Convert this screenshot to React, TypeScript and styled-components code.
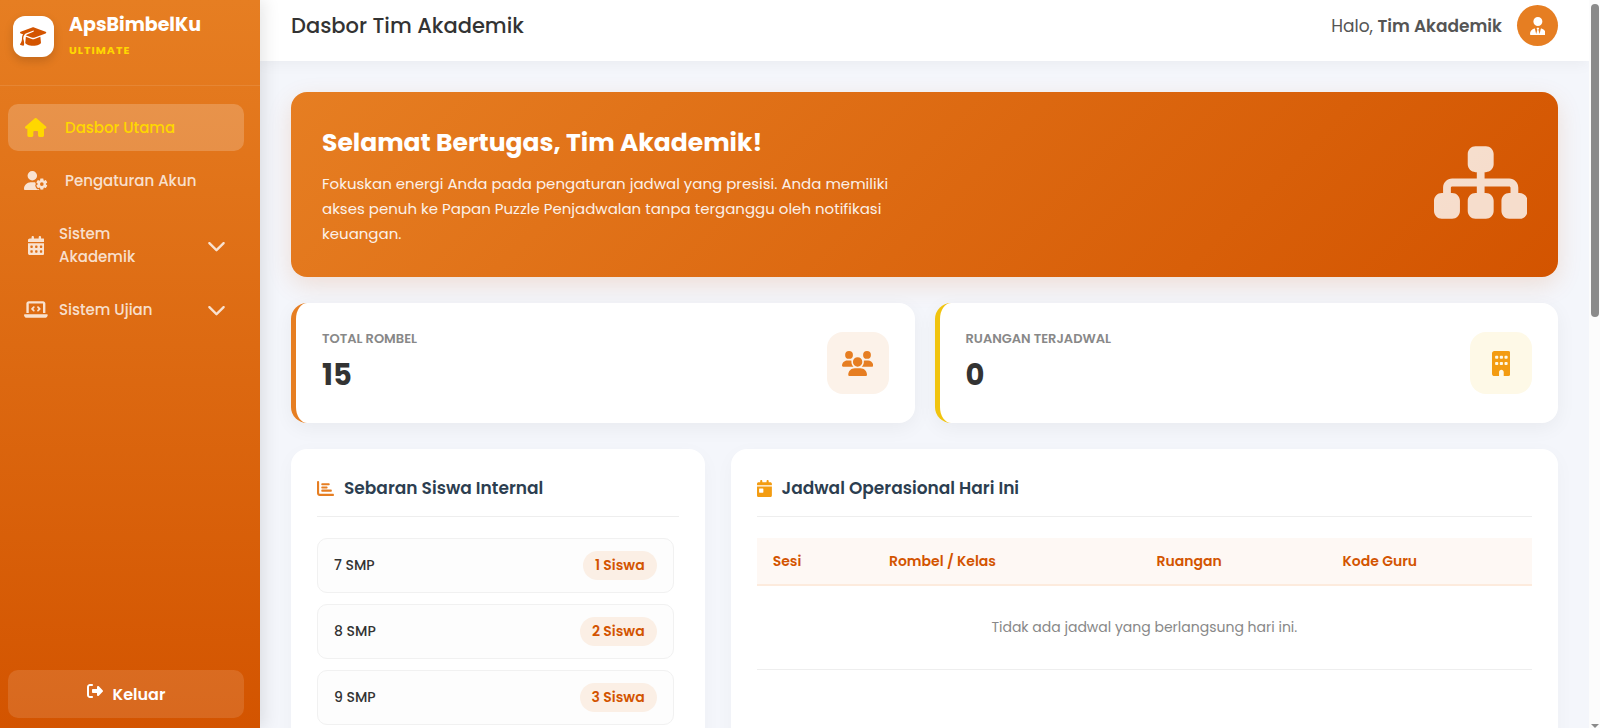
import React from "react";
import styled, { createGlobalStyle } from "styled-components";
import {
  FaBuilding,
  FaCalendarDay,
  FaCalendarDays,
  FaChartBar,
  FaChevronDown,
  FaGraduationCap,
  FaHouse,
  FaLaptopCode,
  FaRightFromBracket,
  FaSitemap,
  FaUserGear,
  FaUserTie,
  FaUsers,
} from "react-icons/fa6";

const GlobalStyle = createGlobalStyle`
  *, *::before, *::after { box-sizing: border-box; }
  body {
    margin: 0;
    font-family: Poppins, Inter, sans-serif;
    font-size: 15px;
    color: #333;
    background: #f4f6fb;
  }
  h1, h2, h3, p, ul { margin: 0; padding: 0; }
  ul { list-style: none; }
  button { font: inherit; cursor: pointer; }
`;

/* Icons share a 512-unit height; $units is the width of the glyph's own box. */
const Icon = styled.span<{ $units?: number }>`
  display: inline-flex;
  flex-shrink: 0;

  svg {
    display: block;
    width: auto;
    height: 1em;
    aspect-ratio: ${(p) => p.$units ?? 512} / 512;
  }
`;

const Shell = styled.div`
  display: flex;
  height: 100vh;
  overflow: hidden;
`;

const Sidebar = styled.aside`
  display: flex;
  flex-direction: column;
  flex: 0 0 260px;
  background: linear-gradient(180deg, #e67e22 0%, #d35400 100%);
  box-shadow: 4px 0 16px rgba(0, 0, 0, 0.1);
  z-index: 2;
`;

const Brand = styled.div`
  display: flex;
  gap: 15px;
  padding: 12px 13px 23px;
  border-bottom: 1px solid rgba(255, 255, 255, 0.1);
`;

const BrandMark = styled.div`
  display: grid;
  place-items: center;
  width: 41px;
  height: 41px;
  margin-top: 4px;
  border-radius: 12px;
  background: #fff;
  color: #d35400;
  font-size: 21px;
  box-shadow: 0 4px 10px rgba(0, 0, 0, 0.15);
`;

const BrandName = styled.div`
  color: #fff;
  font-size: 19px;
  font-weight: 700;
  line-height: 26px;
`;

const BrandTier = styled.div`
  color: #ffd700;
  font-size: 11px;
  font-weight: 700;
  letter-spacing: 1px;
  line-height: 24px;
`;

const Menu = styled.ul`
  display: flex;
  flex-direction: column;
  gap: 6px;
  flex: 1;
  padding: 18px 16px 0 8px;
`;

const MenuLink = styled.a<{ $active?: boolean }>`
  display: flex;
  align-items: center;
  gap: 17px;
  padding: 12px 16px;
  border-radius: 10px;
  font-weight: 500;
  line-height: 23px;
  text-decoration: none;
  color: ${(p) => (p.$active ? "#ffd700" : "rgba(255, 255, 255, 0.8)")};
  background: ${(p) => (p.$active ? "rgba(255, 255, 255, 0.2)" : "transparent")};
`;

const MenuToggle = styled.button`
  display: flex;
  align-items: center;
  gap: 11px;
  width: 100%;
  padding: 12px 18px 12px 16px;
  border: 0;
  border-radius: 10px;
  background: transparent;
  color: rgba(255, 255, 255, 0.8);
  font-weight: 500;
  line-height: 23px;
  text-align: left;
`;

const MenuIcon = styled(Icon)`
  justify-content: center;
  width: 24px;
  font-size: 19px;
`;

const ToggleLabel = styled.span`
  flex: 1;
  max-width: 100px;
`;

const Chevron = styled(Icon)`
  margin-left: auto;
  font-size: 19px;
`;

const SidebarFooter = styled.div`
  padding: 10px 16px 10px 8px;
`;

const LogoutButton = styled.button`
  display: flex;
  align-items: center;
  justify-content: center;
  gap: 10px;
  width: 100%;
  height: 48px;
  border: 0;
  border-radius: 10px;
  background: rgba(255, 255, 255, 0.12);
  color: #fff;
  font-size: 16px;
  font-weight: 600;

  svg { margin-bottom: 6px; }
`;

const Main = styled.main`
  flex: 1;
  min-width: 0;
`;

const TopBar = styled.header`
  display: flex;
  align-items: center;
  justify-content: space-between;
  padding: 5px 31px 15px;
  background: #fff;
  box-shadow: 0 2px 15px rgba(0, 0, 0, 0.05);
`;

const PageTitle = styled.h1`
  font-size: 21px;
  font-weight: 500;
  line-height: 32px;
`;

const Account = styled.div`
  display: flex;
  align-items: center;
  gap: 15px;
  color: #555;
  font-size: 17px;

  strong { font-weight: 600; }
`;

const Avatar = styled.span`
  display: grid;
  place-items: center;
  width: 41px;
  height: 41px;
  border-radius: 50%;
  background: #e67e22;
  color: #fff;
  font-size: 18px;
`;

const Content = styled.div`
  display: flex;
  flex-direction: column;
  gap: 26px;
  padding: 31px;
`;

const Banner = styled.section`
  display: flex;
  align-items: center;
  justify-content: space-between;
  padding: 31px;
  border-radius: 16px;
  background: linear-gradient(135deg, #e67e22 0%, #d35400 100%);
  color: #fff;
  box-shadow: 0 8px 24px rgba(211, 84, 0, 0.15);
`;

const BannerTitle = styled.h2`
  margin-bottom: 8px;
  font-size: 25px;
  font-weight: 700;
  line-height: 40px;
`;

const BannerText = styled.p`
  max-width: 600px;
  line-height: 25px;
  opacity: 0.9;
`;

const BannerArt = styled(Icon)`
  padding-bottom: 4px;
  font-size: 83px;
  opacity: 0.8;
`;

const Stats = styled.section`
  display: grid;
  grid-template-columns: 1fr 1fr;
  gap: 20px;
`;

const StatCard = styled.article<{ $accent: string }>`
  display: flex;
  align-items: center;
  justify-content: space-between;
  padding: 26px;
  min-height: 120px;
  border-left: 5px solid ${(p) => p.$accent};
  border-radius: 16px;
  background: #fff;
  box-shadow: 0 5px 20px rgba(0, 0, 0, 0.05);
`;

const StatLabel = styled.h3`
  color: #888;
  font-size: 13px;
  font-weight: 600;
  line-height: 20px;
`;

const StatValue = styled.p`
  margin-top: 4px;
  font-size: 29px;
  font-weight: 700;
  line-height: 44px;
`;

const StatIcon = styled.span<{ $tint: string; $color: string }>`
  display: grid;
  place-items: center;
  width: 62px;
  height: 62px;
  border-radius: 16px;
  background: ${(p) => p.$tint};
  color: ${(p) => p.$color};
  font-size: 25px;
`;

const Panels = styled.div`
  display: grid;
  grid-template-columns: 1fr 2fr;
  gap: 26px;
`;

const Panel = styled.section`
  min-height: 420px;
  padding: 26px;
  border-radius: 16px;
  background: #fff;
  box-shadow: 0 5px 20px rgba(0, 0, 0, 0.03);
`;

const PanelTitle = styled.h3<{ $icon: string }>`
  display: flex;
  align-items: center;
  gap: 10px;
  margin-bottom: 21px;
  padding-bottom: 15px;
  border-bottom: 1px solid #eee;
  color: #2c3e50;
  font-size: 17px;
  font-weight: 600;
  line-height: 26px;

  svg { color: ${(p) => p.$icon}; }
`;

const LevelList = styled.ul`
  display: flex;
  flex-direction: column;
  gap: 11px;
  padding-right: 5px;
`;

const LevelRow = styled.li`
  display: flex;
  align-items: center;
  justify-content: space-between;
  height: 55px;
  padding: 0 16px;
  border: 1px solid #f1f1f1;
  border-radius: 10px;
  background: #fdfdfd;
  font-size: 14px;
  font-weight: 500;
`;

const CountBadge = styled.span`
  padding: 0 12px;
  border-radius: 16px;
  background: #fbefe5;
  color: #d35400;
  font-weight: 600;
  line-height: 29px;
`;

const Table = styled.table`
  width: 100%;
  table-layout: fixed;
  border-collapse: collapse;
  font-size: 14px;
`;

const HeadCell = styled.th<{ $width: string }>`
  width: ${(p) => p.$width};
  height: 47px;
  padding: 0 16px;
  border-bottom: 2px solid #fdebdd;
  background: #fef8f4;
  color: #d35400;
  font-weight: 600;
  text-align: left;
`;

const EmptyCell = styled.td`
  height: 84px;
  padding: 0 16px;
  border-bottom: 1px solid #eee;
  color: #888;
  text-align: center;
`;

const ScrollTrack = styled.div`
  display: flex;
  flex-direction: column;
  justify-content: space-between;
  align-items: center;
  flex: 0 0 11px;
  padding-top: 4px;
  background: #fcfcfc;
`;

const ScrollThumb = styled.div`
  width: 8px;
  height: 43vh;
  border-radius: 4px;
  background: #8b8b8b;
`;

const ScrollArrow = styled.div`
  border: 4px solid transparent;
  border-top-color: #8b8b8b;
  border-bottom: 0;
`;

const levels = [
  { name: "7 SMP", count: 1 },
  { name: "8 SMP", count: 2 },
  { name: "9 SMP", count: 3 },
];

const columns = [
  { label: "Sesi", width: "15%" },
  { label: "Rombel / Kelas", width: "34.5%" },
  { label: "Ruangan", width: "24%" },
  { label: "Kode Guru", width: "26.5%" },
];

export default function App() {
  return (
    <>
      <GlobalStyle />
      <Shell>
        <Sidebar>
          <Brand>
            <BrandMark><Icon $units={640}><FaGraduationCap /></Icon></BrandMark>
            <div>
              <BrandName>ApsBimbelKu</BrandName>
              <BrandTier>ULTIMATE</BrandTier>
            </div>
          </Brand>
          <Menu>
            <li>
              <MenuLink href="#dasbor" $active>
                <MenuIcon $units={576}><FaHouse /></MenuIcon>
                Dasbor Utama
              </MenuLink>
            </li>
            <li>
              <MenuLink href="#akun">
                <MenuIcon $units={640}><FaUserGear /></MenuIcon>
                Pengaturan Akun
              </MenuLink>
            </li>
            <li>
              <MenuToggle type="button" aria-expanded={false}>
                <MenuIcon $units={448}><FaCalendarDays /></MenuIcon>
                <ToggleLabel>Sistem Akademik</ToggleLabel>
                <Chevron><FaChevronDown /></Chevron>
              </MenuToggle>
            </li>
            <li>
              <MenuToggle type="button" aria-expanded={false}>
                <MenuIcon $units={640}><FaLaptopCode /></MenuIcon>
                <ToggleLabel>Sistem Ujian</ToggleLabel>
                <Chevron><FaChevronDown /></Chevron>
              </MenuToggle>
            </li>
          </Menu>
          <SidebarFooter>
            <LogoutButton type="button">
              <Icon><FaRightFromBracket /></Icon>
              Keluar
            </LogoutButton>
          </SidebarFooter>
        </Sidebar>

        <Main>
          <TopBar>
            <PageTitle>Dasbor Tim Akademik</PageTitle>
            <Account>
              <span>Halo, <strong>Tim Akademik</strong></span>
              <Avatar><Icon $units={448}><FaUserTie /></Icon></Avatar>
            </Account>
          </TopBar>
          <Content>
            <Banner>
              <div>
                <BannerTitle>Selamat Bertugas, Tim Akademik!</BannerTitle>
                <BannerText>
                  Fokuskan energi Anda pada pengaturan jadwal yang presisi. Anda memiliki
                  akses penuh ke Papan Puzzle Penjadwalan tanpa terganggu oleh notifikasi
                  keuangan.
                </BannerText>
              </div>
              <BannerArt $units={576}><FaSitemap /></BannerArt>
            </Banner>

            <Stats>
              <StatCard $accent="#e67e22">
                <div>
                  <StatLabel>TOTAL ROMBEL</StatLabel>
                  <StatValue>15</StatValue>
                </div>
                <StatIcon $tint="#fcf2e9" $color="#e67e22">
                  <Icon $units={640}><FaUsers /></Icon>
                </StatIcon>
              </StatCard>
              <StatCard $accent="#f1c40f">
                <div>
                  <StatLabel>RUANGAN TERJADWAL</StatLabel>
                  <StatValue>0</StatValue>
                </div>
                <StatIcon $tint="#fef9e7" $color="#f39c12">
                  <Icon $units={384}><FaBuilding /></Icon>
                </StatIcon>
              </StatCard>
            </Stats>

            <Panels>
              <Panel>
                <PanelTitle $icon="#e67e22">
                  <Icon><FaChartBar /></Icon>
                  Sebaran Siswa Internal
                </PanelTitle>
                <LevelList>
                  {levels.map((level) => (
                    <LevelRow key={level.name}>
                      {level.name}
                      <CountBadge>{level.count} Siswa</CountBadge>
                    </LevelRow>
                  ))}
                </LevelList>
              </Panel>
              <Panel>
                <PanelTitle $icon="#f39c12">
                  <Icon $units={448}><FaCalendarDay /></Icon>
                  Jadwal Operasional Hari Ini
                </PanelTitle>
                <Table>
                  <thead>
                    <tr>
                      {columns.map((column) => (
                        <HeadCell key={column.label} scope="col" $width={column.width}>
                          {column.label}
                        </HeadCell>
                      ))}
                    </tr>
                  </thead>
                  <tbody>
                    <tr>
                      <EmptyCell colSpan={columns.length}>
                        Tidak ada jadwal yang berlangsung hari ini.
                      </EmptyCell>
                    </tr>
                  </tbody>
                </Table>
              </Panel>
            </Panels>
          </Content>
        </Main>

        <ScrollTrack aria-hidden="true">
          <ScrollThumb />
          <ScrollArrow />
        </ScrollTrack>
      </Shell>
    </>
  );
}
